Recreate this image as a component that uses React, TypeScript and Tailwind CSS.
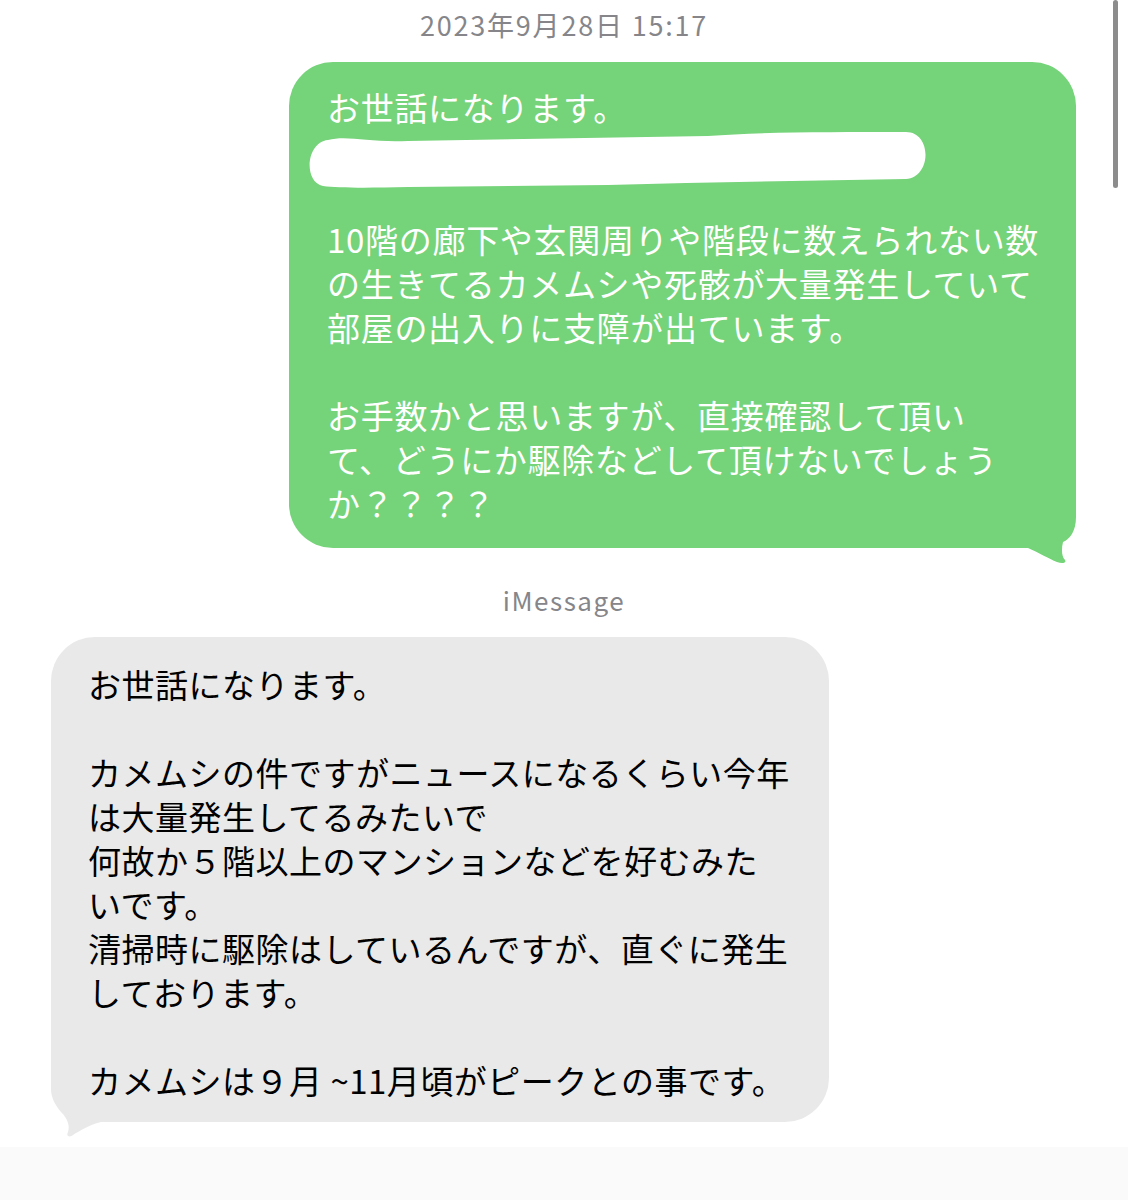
const sent = [
  "お世話になります。",
  "__SCRIBBLE__",
  "",
  "10階の廊下や玄関周りや階段に数えられない数",
  "の生きてるカメムシや死骸が大量発生していて",
  "部屋の出入りに支障が出ています。",
  "",
  "お手数かと思いますが、直接確認して頂い",
  "て、どうにか駆除などして頂けないでしょう",
  "か？？？？",
];

const received = [
  "お世話になります。",
  "",
  "カメムシの件ですがニュースになるくらい今年",
  "は大量発生してるみたいで",
  "何故か５階以上のマンションなどを好むみた",
  "いです。",
  "清掃時に駆除はしているんですが、直ぐに発生",
  "しております。",
  "",
  "カメムシは９月 ~11月頃がピークとの事です。",
];

function Scribble() {
  return (
    <svg className="absolute left-[-19px] top-[1px]" width="622" height="58" viewBox="0 0 622 58">
      <path
        d="M20 10 C40 5 62 13 100 11 L400 6 C450 2 520 2 598 2 C624 2 624 47 598 49 C500 51 400 52 300 55 L100 57 C60 58 30 58 15 56 C-5 52 -2 12 20 10 Z"
        fill="#ffffff"
      />
    </svg>
  );
}

export default function App() {
  return (
    <div className="relative w-[1128px] h-[1200px] bg-white flex flex-col overflow-hidden" style={{ fontFamily: '"Noto Sans CJK JP", "Noto Sans", sans-serif' }}>
      <div className="absolute right-[10px] top-0 w-[5px] h-[188px] rounded-full bg-[#8c8c8c]" />

      <div className="pt-[8px] h-[62px] text-center text-[27px] leading-[34px] tracking-[1.8px] text-[#86868a]">
        2023年9月28日 15:17
      </div>

      <div className="self-end mr-[52px] relative w-[787px] h-[486px] rounded-[44px] bg-[#75d379] pl-[38px] pt-[23px] text-white text-[33px] tracking-[0.7px]">
        <svg className="absolute right-0 top-[443px]" width="56" height="60" viewBox="0 0 56 60">
          <path
            d="M0 0 L56 0 L56 12 C56 26 50 34 43 37 C41 45 42 52 45 55 C47 58 42 59 37 57 C29 54 18 47 8 43 L0 43 Z"
            fill="#75d379"
          />
        </svg>
        {sent.map((line, i) => (
          <div key={i} className="relative h-[44px] leading-[44px] whitespace-pre">
            {line === "__SCRIBBLE__" ? <Scribble /> : line}
          </div>
        ))}
      </div>

      <div className="mt-[37px] h-[52px] text-center text-[26px] leading-[30px] tracking-[1.5px] text-[#86868a]">iMessage</div>

      <div className="ml-[51px] relative w-[778px] h-[485px] rounded-[44px] bg-[#e9e9e9] pl-[37px] pt-[25px] text-black text-[33px] tracking-[0.5px]">
        <svg className="absolute left-0 top-[442px]" width="60" height="60" viewBox="0 0 60 60">
          <path
            d="M0 0 L60 0 L60 43 L50 43 C40 45 30 51 22 56 C18 59 15 57 17 53 C19 47 17 40 10 33 C4 26 0 18 0 10 Z"
            fill="#e9e9e9"
          />
        </svg>
        {received.map((line, i) => (
          <div key={i} className="relative h-[44px] leading-[44px] whitespace-pre">
            {line}
          </div>
        ))}
      </div>

      <div className="mt-[25px] flex-1 bg-[#fafafa]" />
    </div>
  );
}
